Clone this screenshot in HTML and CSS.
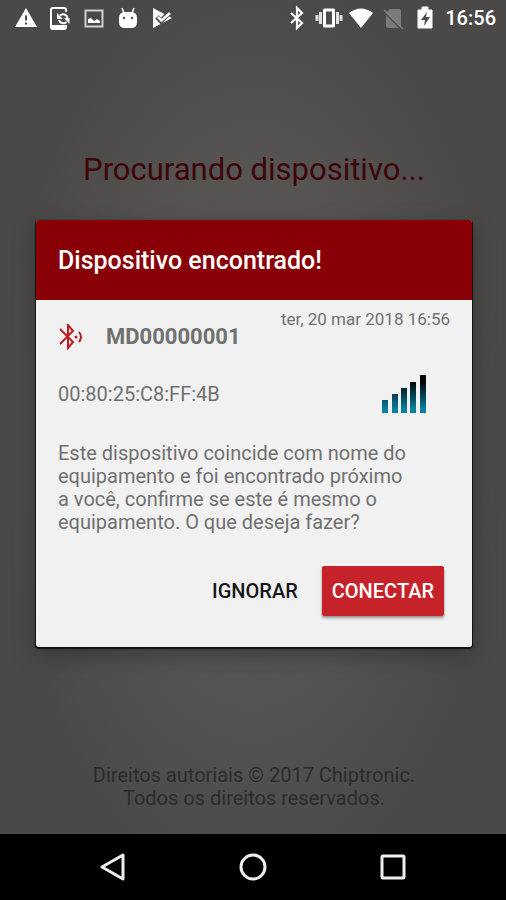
FILE: index.html
```html
<!DOCTYPE html>
<html lang="pt-BR">
<head>
    <meta charset="UTF-8">
    <meta name="viewport" content="width=device-width, initial-scale=1.0">
    <title>Dispositivo encontrado</title>
    <link rel="stylesheet" href="styles.css">
</head>
<body>
    <header class="status-bar">
        <div class="status-icons">
            <svg class="icon" viewBox="0 0 24 24"><path d="M1 21h22L12 2z" fill="#fff"/><path d="M11 16.500h2v2h-2zM11 9.500h2v5h-2z" fill="#4a4948"/></svg>
            <!-- Phone sync -->
            <svg class="icon" viewBox="0 0 24 24"><path d="M18 6V4a2 2 0 0 0-2-2H5a2 2 0 0 0-2 2v17a2 2 0 0 0 2 2h11a2 2 0 0 0 2-2v-2" fill="none" stroke="#fff" stroke-width="2"/><path d="M4 19h13v3H4z" fill="#fff"/><path d="M12 9.500A4.500 4.500 0 0 1 19.500 12M18.500 16a4.500 4.500 0 0 1-7.500-2" fill="none" stroke="#fff" stroke-width="2"/><path d="M9 7v6h6zM21.500 18v-6h-5.500z" fill="#fff"/></svg>
            <svg class="icon" viewBox="0 0 24 24"><path d="M3.500 4.500h17v16h-17z" fill="none" stroke="#d0d0d0" stroke-width="2"/><path d="M6 17v-4l3-1 3 3 3-2 3 2v2z" fill="#fff"/></svg>
            <!-- Android head -->
            <svg class="icon" viewBox="0 0 24 24"><path d="M6 2l2 5M18 2l-2 5" stroke="#fff" stroke-width="1.500"/><path d="M3 12q0-6 6-6h6q6 0 6 6v4q0 6-6 6H9q-6 0-6-6z" fill="#fff"/><circle cx="8" cy="12" r="1.200" fill="#4a4948"/><circle cx="16" cy="12" r="1.200" fill="#4a4948"/></svg>
            <svg class="icon" viewBox="0 0 24 24"><path d="M3 2l19 10L3 22z" fill="#fff"/><path d="M7 11l4 4 9-9" fill="none" stroke="#4a4948" stroke-width="5"/><path d="M8 11l3.500 3.500L20 7" fill="none" stroke="#fff" stroke-width="2.500"/></svg>
        </div>
        <div class="status-icons status-icons-right">
            <svg class="icon" viewBox="0 0 24 24"><path d="M6 7l11 10-5 5V2l5 5L6 17" fill="none" stroke="#fff" stroke-width="2.200"/></svg>
            <!-- Vibrate -->
            <svg class="icon" viewBox="0 0 24 24"><path d="M7.500 4h9v16h-9z" fill="none" stroke="#fff" stroke-width="3" stroke-linejoin="round"/><path d="M3.500 6v12M20.500 6v12" stroke="#e0e0e0" stroke-width="3"/><path d="M0 9v6M24 9v6" stroke="#e0e0e0" stroke-width="3"/></svg>
            <svg class="icon" viewBox="0 0 24 24"><path d="M0 7q12-9 24 0L12 22z" fill="#fff"/></svg>
            <svg class="icon" viewBox="0 0 24 24"><path d="M9 3h9a2 2 0 0 1 2 2v15.500L5 7z" fill="#7b7a79"/><path d="M5 9l13 13H7a2 2 0 0 1-2-2z" fill="#7b7a79"/><path d="M3 4l19 19" stroke="#858483" stroke-width="1.500"/></svg>
            <svg class="icon" viewBox="0 0 24 24"><path d="M5 4h4V1h6v3h4v18H5z" fill="#fff" stroke="#fff" stroke-linejoin="round"/><path d="M14 6l-6 8h4l-1 6 6-9h-4z" fill="#4a4948"/></svg>
            <span class="clock">16:56</span>
        </div>
    </header>

    <main class="screen">
        <h1 class="searching">Procurando dispositivo...</h1>

        <section class="dialog" role="dialog" aria-labelledby="dialog-title">
            <h2 class="dialog-title" id="dialog-title">Dispositivo encontrado!</h2>
            <div class="dialog-body">
                <div class="device">
                    <svg class="device-icon" viewBox="0 0 26 26"><path d="M2 5l13 13-5 6V1l5 6L2 20" fill="none" stroke="#bd1a22" stroke-width="2"/><circle cx="18" cy="13" r="1.500" fill="#bd1a22"/><path d="M21 8q4 5 0 10" fill="none" stroke="#bd1a22" stroke-width="2"/></svg>
                    <strong class="device-name">MD00000001</strong>
                    <time class="device-date" datetime="2018-03-20T16:56">ter, 20 mar 2018 16:56</time>
                </div>
                <div class="address">
                    <span>00:80:25:C8:FF:4B</span>
                    <svg class="signal" viewBox="0 0 44 38">
                        <defs>
                            <linearGradient id="bars" gradientUnits="userSpaceOnUse" x1="0" y1="0" x2="0" y2="38">
                                <stop offset="0.2" stop-color="#05090c"/>
                                <stop offset="0.9" stop-color="#087f9e"/>
                            </linearGradient>
                        </defs>
                        <path d="M0 25h6v13H0zM10 19h6v19h-6zM19 13h6v25h-6zM28 7h6v31h-6zM38 0h6v38h-6z" fill="url(#bars)"/>
                    </svg>
                </div>
                <p class="message">Este dispositivo coincide com nome do equipamento e foi encontrado próximo a você, confirme se este é mesmo o equipamento. O que deseja fazer?</p>
                <div class="actions">
                    <button type="button" class="btn">IGNORAR</button>
                    <button type="button" class="btn btn-primary">CONECTAR</button>
                </div>
            </div>
        </section>

        <footer class="copyright">Direitos autoriais © 2017 Chiptronic.<br>Todos os direitos reservados.</footer>
    </main>

    <nav class="nav-bar">
        <button type="button" class="nav-btn" aria-label="Voltar">
            <svg class="nav-icon" viewBox="0 0 28 28"><path d="M3 14L24 2v24z" fill="none" stroke="#eee" stroke-width="3" stroke-linejoin="round"/></svg>
        </button>
        <button type="button" class="nav-btn" aria-label="Início">
            <svg class="nav-icon" viewBox="0 0 28 28"><circle cx="14" cy="14" r="12" fill="none" stroke="#eee" stroke-width="3"/></svg>
        </button>
        <button type="button" class="nav-btn" aria-label="Recentes">
            <svg class="nav-icon" viewBox="0 0 28 28"><rect x="3" y="3" width="22" height="22" rx="1" fill="none" stroke="#eee" stroke-width="3"/></svg>
        </button>
    </nav>
</body>
</html>
```

FILE: styles.css
```css
* {
    box-sizing: border-box;
}
body {
    margin: 0;
    min-height: 100vh;
    display: flex;
    flex-direction: column;
    font-family: Roboto, "Liberation Sans", sans-serif;
    color: #707070;
    background: radial-gradient(ellipse at 50% 48%, #5c5a57 0%, #565452 40%, #4a4948 70%);
}
h1, h2, p {
    margin: 0;
    font-weight: 400;
}

/* Status bar */
.status-bar {
    display: flex;
    justify-content: space-between;
    height: 36px;
    padding: 0 10px 0 14px;
}
.status-icons {
    display: flex;
    align-items: center;
    gap: 10px;
}
.status-icons-right {
    gap: 8px;
}
.icon {
    width: 24px;
    height: 24px;
    overflow: visible;
}
.clock {
    font-size: 20px;
    font-weight: 500;
    color: #fff;
}

/* Screen behind and dialog */
.screen {
    flex: 1;
    display: flex;
    flex-direction: column;
    align-items: center;
    padding: 114px 34px 24px 36px;
}
.searching {
    font-size: 31px;
    line-height: 40px;
    color: #3d0509;
}
.dialog {
    width: 100%;
    margin-top: 30px;
    border-radius: 3px;
    background: #f1f1f1;
    box-shadow: 0 1px 1px 1px #111, 0 8px 24px rgba(0, 0, 0, 0.3);
}
.dialog-title {
    padding: 25px 22px 23px;
    font-size: 25px;
    line-height: 32px;
    font-weight: 500;
    color: #fff;
    background: #880006;
    border-radius: 3px 3px 0 0;
}
.dialog-body {
    padding: 8px 22px 31px;
}
.device {
    display: flex;
    align-items: flex-end;
    height: 42px;
}
.device-icon {
    width: 26px;
    height: 26px;
}
.device-name {
    margin-left: 22px;
    font-size: 22px;
    line-height: 26px;
    font-weight: 700;
}
.device-date {
    align-self: flex-start;
    margin-left: auto;
    font-size: 17px;
    line-height: 22px;
}
.address {
    display: flex;
    align-items: center;
    justify-content: space-between;
    margin-top: 25px;
    padding-right: 24px;
    font-size: 20px;
    line-height: 24px;
}
.signal {
    width: 44px;
    height: 38px;
}
.message {
    max-width: 352px;
    margin-top: 29px;
    font-size: 20px;
    line-height: 23px;
}
.actions {
    display: flex;
    justify-content: flex-end;
    gap: 14px;
    margin-top: 32px;
    padding-right: 6px;
}
.btn {
    height: 50px;
    padding: 0 10px;
    border: 0;
    font-family: inherit;
    font-size: 20px;
    font-weight: 500;
    color: #161616;
    background: none;
}
.btn-primary {
    color: #fff;
    background: #c6222a;
    border-radius: 2px;
    box-shadow: 0 2px 3px rgba(0, 0, 0, 0.4);
}
.copyright {
    margin-top: auto;
    font-size: 20px;
    line-height: 23px;
    text-align: center;
    color: #2c2b2a;
}

/* Navigation bar */
.nav-bar {
    display: flex;
    justify-content: center;
    gap: 112px;
    height: 66px;
    background: #000;
}
.nav-btn {
    padding: 0;
    border: 0;
    background: none;
}
.nav-icon {
    display: block;
    width: 28px;
    height: 28px;
}
```
